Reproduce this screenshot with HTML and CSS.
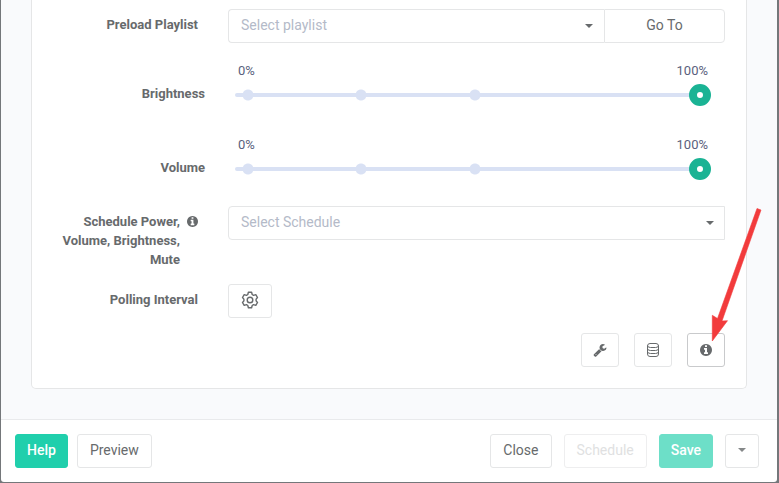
FILE: index.html
```html
<!DOCTYPE html>
<html lang="en">

<head>
    <meta charset="UTF-8">
    <meta name="viewport" content="width=device-width, initial-scale=1.0">
    <title>Edit Display</title>
    <link rel="stylesheet" href="styles.css">
</head>

<body>
    <form class="modal">
        <div class="modal-body">
            <div class="card">
                <div class="form-row">
                    <label class="form-label" for="playlist">Preload Playlist</label>
                    <div class="input-group">
                        <div class="select">
                            <select id="playlist" name="playlist">
                                <option value="">Select playlist</option>
                            </select>
                        </div>
                        <button type="button" class="btn btn-addon">Go To</button>
                    </div>
                </div>

                <div class="form-row slider-row">
                    <label class="form-label" for="brightness">Brightness</label>
                    <div class="slider">
                        <div class="slider-scale"><span>0%</span><span>100%</span></div>
                        <input type="range" id="brightness" name="brightness" min="0" max="100" value="100">
                    </div>
                </div>

                <div class="form-row slider-row">
                    <label class="form-label" for="volume">Volume</label>
                    <div class="slider">
                        <div class="slider-scale"><span>0%</span><span>100%</span></div>
                        <input type="range" id="volume" name="volume" min="0" max="100" value="100">
                    </div>
                </div>

                <div class="form-row">
                    <label class="form-label with-info" for="schedule">
                        <span>Schedule Power, Volume, Brightness, Mute</span>
                        <svg class="info-icon" viewBox="128 128 1536 1536" aria-hidden="true">
                            <path d="M1152 1376v-160q0-14-9-23t-23-9h-96v-512q0-14-9-23t-23-9h-320q-14 0-23 9t-9 23v160q0 14 9 23t23 9h96v320h-96q-14 0-23 9t-9 23v160q0 14 9 23t23 9h448q14 0 23-9t9-23zm-128-896v-160q0-14-9-23t-23-9h-192q-14 0-23 9t-9 23v160q0 14 9 23t23 9h192q14 0 23-9t9-23zm640 416q0 209-103 385.5t-279.5 279.5-385.5 103-385.5-103-279.5-279.5-103-385.5 103-385.5 279.5-279.5 385.5-103 385.5 103 279.5 279.5 103 385.5z"/>
                        </svg>
                    </label>
                    <div class="select">
                        <select id="schedule" name="schedule">
                            <option value="">Select Schedule</option>
                        </select>
                    </div>
                </div>

                <div class="form-row">
                    <label class="form-label" for="polling">Polling Interval</label>
                    <button type="button" class="btn btn-gear" id="polling" aria-label="Polling Interval">
                        <svg class="line-icon gear-icon" viewBox="0 0 18 18" aria-hidden="true">
                            <path d="M7.4 1.2h3.2l.6 2.3 1.3.8 2.3-.7 1.7 2.9-1.4 1.6v1.8l1.4 1.6-1.7 2.9-2.3-.7-1.3.8-.6 2.3H7.4l-.6-2.3-1.3-.8-2.3.7-1.7-2.9 1.400-1.600V8.100L1.500 6.500l1.700-2.900 2.300.7 1.300-.8z"/>
                            <circle cx="9" cy="9" r="2.8"/>
                        </svg>
                    </button>
                </div>

                <div class="tools">
                    <button type="button" class="btn" aria-label="Tools">
                        <svg class="solid-icon" viewBox="0 0 1792 1792" aria-hidden="true">
                            <path d="M448 1472q0-26-19-45t-45-19-45 19-19 45 19 45 45 19 45-19 19-45zm644-420l-682 682q-37 37-90 37-52 0-91-37l-106-108q-38-36-38-90 0-53 38-91l681-681q39 98 114.5 173.5t173.5 114.5zm634-435q0 39-23 106-47 134-164.5 217.5t-258.5 83.5q-185 0-316.5-131.5t-131.5-316.5 131.5-316.5 316.5-131.5q58 0 121.5 16.5t107.5 46.5q16 11 16 28t-16 28l-293 169v224l193 107q5-3 79-48.5t135.5-81 70.5-35.5q15 0 23.5 10t8.5 25z"/>
                        </svg>
                    </button>
                    <button type="button" class="btn" aria-label="Storage">
                        <svg class="line-icon" viewBox="0 0 14 14" aria-hidden="true">
                            <rect x="1.500" y=".5" width="11" height="13" rx="2.500"/>
                            <path d="M1.500 2.500q0 2 3 2h5q3 0 3-2M1.500 5.500q0 2 3 2h5q3 0 3-2M1.500 8.500q0 2 3 2h5q3 0 3-2"/>
                        </svg>
                    </button>
                    <button type="button" class="btn btn-active" aria-label="Info">
                        <svg class="solid-icon" viewBox="0 0 1792 1792" aria-hidden="true">
                            <path d="M1152 1376v-160q0-14-9-23t-23-9h-96v-512q0-14-9-23t-23-9h-320q-14 0-23 9t-9 23v160q0 14 9 23t23 9h96v320h-96q-14 0-23 9t-9 23v160q0 14 9 23t23 9h448q14 0 23-9t9-23zm-128-896v-160q0-14-9-23t-23-9h-192q-14 0-23 9t-9 23v160q0 14 9 23t23 9h192q14 0 23-9t9-23zm640 416q0 209-103 385.5t-279.5 279.5-385.5 103-385.5-103-279.5-279.5-103-385.5 103-385.5 279.5-279.5 385.5-103 385.5 103 279.5 279.5 103 385.5z"/>
                        </svg>
                    </button>
                </div>
            </div>
        </div>

        <div class="modal-footer">
            <button type="button" class="btn btn-primary">Help</button>
            <button type="button" class="btn">Preview</button>
            <div class="footer-actions">
                <button type="button" class="btn">Close</button>
                <button type="button" class="btn" disabled>Schedule</button>
                <button type="submit" class="btn btn-primary" disabled>Save</button>
                <button type="button" class="btn" aria-label="More save options"><span class="caret"></span></button>
            </div>
        </div>

        <svg class="pointer" viewBox="0 0 56 138" aria-hidden="true">
            <path d="M49 2.500L53 4 14 115 19.500 114.700 4.300 135V109.300L9.500 112.500z"/>
        </svg>
    </form>
</body>

</html>
```

FILE: styles.css
```css
/* General Styles */
* {
    box-sizing: border-box;
}

body {
    margin: 0 2px 1px 1px;
    background-color: #74777a;
    font-family: Roboto, Arial, sans-serif;
    font-size: 14px;
    color: #676a6c;
}

.modal {
    position: relative;
    background-color: #fff;
    border-radius: 0 0 3px 3px;
}

.modal-body {
    padding: 0 30px 30px;
    background-color: #f9fafc;
}

.card {
    padding: 9px 21px 21px 31px;
    background-color: #fff;
    border: 1px solid #e5e6e7;
    border-top: none;
    border-radius: 0 0 5px 5px;
}

/* Form rows */
.form-row {
    display: grid;
    grid-template-columns: 135px 1fr;
    column-gap: 30px;
    align-items: start;
    margin-bottom: 15px;
}

.form-label {
    padding-top: 6px;
    font-size: 13px;
    font-weight: bold;
    line-height: 19px;
    text-align: right;
}

.with-info {
    display: flex;
    justify-content: flex-end;
    gap: 7px;
    margin-left: -12px;
}

.with-info span {
    max-width: 129px;
}

.info-icon {
    flex: none;
    width: 11px;
    height: 11px;
    margin-top: 4px;
    fill: #676a6c;
}

/* Selects */
.select {
    position: relative;
    flex: 1;
}

.select::after,
.caret {
    border: 4px solid transparent;
    border-top-color: #676a6c;
    border-bottom: none;
}

.select::after {
    content: "";
    position: absolute;
    top: 15px;
    right: 11px;
    pointer-events: none;
}

.select select {
    display: block;
    width: 100%;
    height: 34px;
    padding: 0 12px 2px;
    appearance: none;
    background-color: #fff;
    border: 1px solid #e5e6e7;
    border-radius: 4px 0 0 4px;
    font: inherit;
    color: #b4bac8;
}

.input-group {
    display: flex;
}

.input-group select {
    border-right: none;
}

/* Sliders */
.slider-row {
    grid-template-columns: 142px 1fr;
    margin-bottom: 0;
    padding: 4px 14px 26px 0;
}

.slider-row .form-label {
    padding-top: 22px;
}

.slider-scale {
    display: flex;
    justify-content: space-between;
    padding: 0 3px;
    margin-bottom: 4px;
    font-size: 13px;
    line-height: 18px;
    color: #5a5f7d;
}

.slider input {
    display: block;
    width: 100%;
    height: 22px;
    margin: 0;
    appearance: none;
    background:
        radial-gradient(circle at 13px 50%, #d9e1f4 5px, transparent 6px),
        radial-gradient(circle at calc((100% - 24px) * 0.25 + 13px) 50%, #d9e1f4 5px, transparent 6px),
        radial-gradient(circle at calc((100% - 24px) * 0.5 + 14px) 50%, #d9e1f4 5px, transparent 6px);
}

.slider input::-webkit-slider-runnable-track {
    height: 4px;
    background-color: #d9e1f4;
    border-radius: 2px;
}

.slider input::-webkit-slider-thumb {
    appearance: none;
    width: 22px;
    height: 22px;
    margin-top: -9px;
    background-color: #fff;
    border: 8px solid #1ab394;
    border-radius: 50%;
}

/* Buttons */
.btn {
    display: flex;
    align-items: center;
    justify-content: center;
    height: 34px;
    padding: 0 12px 2px;
    background-color: #fff;
    border: 1px solid #e5e6e7;
    border-radius: 3px;
    font: inherit;
    color: #676a6c;
    cursor: pointer;
}

.btn:disabled {
    opacity: 0.65;
    color: #d0d1d2;
    cursor: default;
}

.btn-primary,
.btn-primary:disabled {
    padding: 0 11px 2px;
    background-color: #20cfac;
    border-color: #20cfac;
    font-weight: 500;
    color: #fff;
}

.btn-addon {
    width: 121px;
    border-radius: 0 4px 4px 0;
}

.btn-gear {
    width: 44px;
}

.btn-active {
    border-color: #c9cacc;
}

.solid-icon,
.line-icon {
    width: 14px;
    height: 14px;
    fill: #676a6c;
}

.line-icon {
    fill: none;
    stroke: #676a6c;
}

.gear-icon {
    flex: none;
    width: 18px;
    height: 18px;
    stroke-width: 1.4;
    stroke-linejoin: round;
}

.tools {
    display: flex;
    justify-content: flex-end;
    gap: 15px;
}

.tools .btn {
    padding: 0 11px 1px;
}

/* Footer */
.modal-footer {
    display: flex;
    gap: 9px;
    padding: 14px 18px 14px 14px;
    border-top: 1px solid #e9eaec;
}

.footer-actions {
    display: flex;
    gap: 12px;
    margin-left: auto;
}

.footer-actions .caret {
    opacity: 0.8;
}

/* Arrow over the info button */
.pointer {
    position: absolute;
    top: 206px;
    right: 13px;
    width: 56px;
    height: 138px;
    fill: #f23b3c;
    stroke: #f23b3c;
    stroke-width: 0.6;
    pointer-events: none;
}
```
